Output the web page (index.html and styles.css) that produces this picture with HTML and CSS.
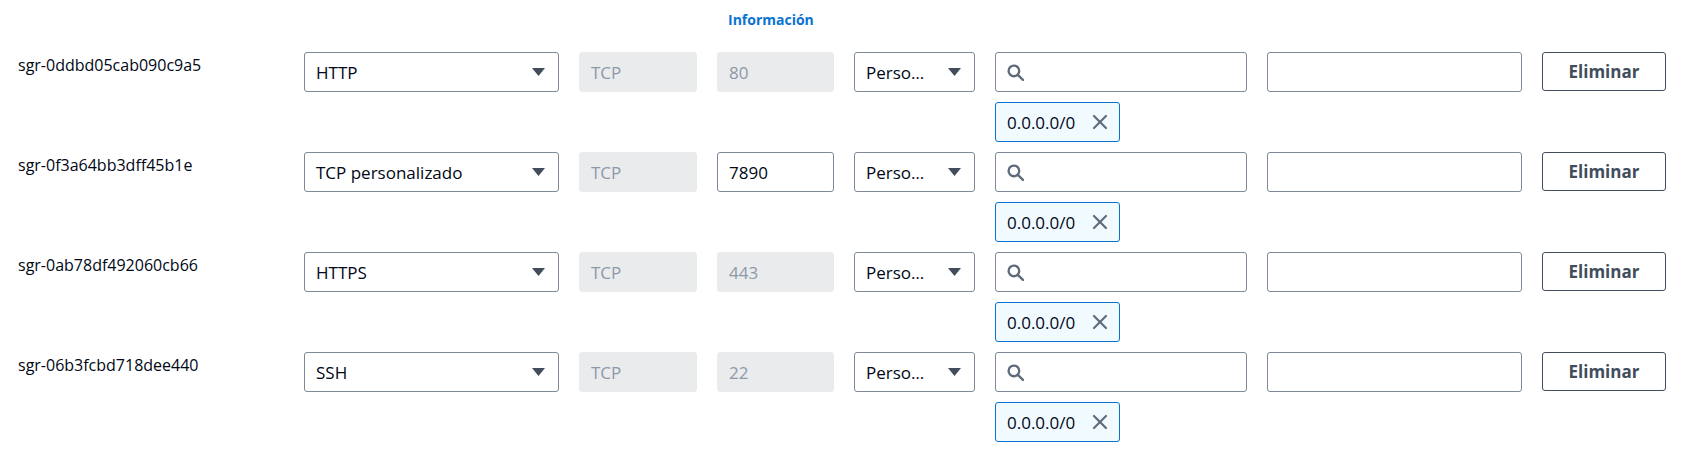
FILE: index.html
```html
<!DOCTYPE html>
<html lang="es">
<head>
<meta charset="utf-8">
<title>Reglas de entrada</title>
<link rel="stylesheet" href="styles.css">
</head>
<body>
<div class="editor">
  <div class="grid header">
    <div></div><div></div><div></div>
    <div class="info-cell"><a class="info" href="#">Información</a></div>
  </div>

  <div class="grid row">
    <div class="rule-id">sgr-0ddbd05cab090c9a5</div>
    <div class="field select"><span class="val">HTTP</span><svg class="caret" viewBox="0 0 13 8"><polygon points="0,0 13,0 6.5,8"/></svg></div>
    <div class="field disabled">TCP</div>
    <div class="field disabled">80</div>
    <div class="field select"><span class="val">Perso…</span><svg class="caret" viewBox="0 0 13 8"><polygon points="0,0 13,0 6.5,8"/></svg></div>
    <div class="source">
      <div class="field search"><svg class="mag" viewBox="0 0 16 16"><circle cx="6.5" cy="6.5" r="5"/><line x1="10.2" y1="10.2" x2="15" y2="15"/></svg></div>
      <div class="token"><span>0.0.0.0/0</span><svg class="x" viewBox="0 0 16 16"><line x1="2" y1="2" x2="14" y2="14"/><line x1="14" y1="2" x2="2" y2="14"/></svg></div>
    </div>
    <div class="field"></div>
    <button class="btn" type="button">Eliminar</button>
  </div>

  <div class="grid row">
    <div class="rule-id">sgr-0f3a64bb3dff45b1e</div>
    <div class="field select"><span class="val">TCP personalizado</span><svg class="caret" viewBox="0 0 13 8"><polygon points="0,0 13,0 6.5,8"/></svg></div>
    <div class="field disabled">TCP</div>
    <div class="field">7890</div>
    <div class="field select"><span class="val">Perso…</span><svg class="caret" viewBox="0 0 13 8"><polygon points="0,0 13,0 6.5,8"/></svg></div>
    <div class="source">
      <div class="field search"><svg class="mag" viewBox="0 0 16 16"><circle cx="6.5" cy="6.5" r="5"/><line x1="10.2" y1="10.2" x2="15" y2="15"/></svg></div>
      <div class="token"><span>0.0.0.0/0</span><svg class="x" viewBox="0 0 16 16"><line x1="2" y1="2" x2="14" y2="14"/><line x1="14" y1="2" x2="2" y2="14"/></svg></div>
    </div>
    <div class="field"></div>
    <button class="btn" type="button">Eliminar</button>
  </div>

  <div class="grid row">
    <div class="rule-id">sgr-0ab78df492060cb66</div>
    <div class="field select"><span class="val">HTTPS</span><svg class="caret" viewBox="0 0 13 8"><polygon points="0,0 13,0 6.5,8"/></svg></div>
    <div class="field disabled">TCP</div>
    <div class="field disabled">443</div>
    <div class="field select"><span class="val">Perso…</span><svg class="caret" viewBox="0 0 13 8"><polygon points="0,0 13,0 6.5,8"/></svg></div>
    <div class="source">
      <div class="field search"><svg class="mag" viewBox="0 0 16 16"><circle cx="6.5" cy="6.5" r="5"/><line x1="10.2" y1="10.2" x2="15" y2="15"/></svg></div>
      <div class="token"><span>0.0.0.0/0</span><svg class="x" viewBox="0 0 16 16"><line x1="2" y1="2" x2="14" y2="14"/><line x1="14" y1="2" x2="2" y2="14"/></svg></div>
    </div>
    <div class="field"></div>
    <button class="btn" type="button">Eliminar</button>
  </div>

  <div class="grid row">
    <div class="rule-id">sgr-06b3fcbd718dee440</div>
    <div class="field select"><span class="val">SSH</span><svg class="caret" viewBox="0 0 13 8"><polygon points="0,0 13,0 6.5,8"/></svg></div>
    <div class="field disabled">TCP</div>
    <div class="field disabled">22</div>
    <div class="field select"><span class="val">Perso…</span><svg class="caret" viewBox="0 0 13 8"><polygon points="0,0 13,0 6.5,8"/></svg></div>
    <div class="source">
      <div class="field search"><svg class="mag" viewBox="0 0 16 16"><circle cx="6.5" cy="6.5" r="5"/><line x1="10.2" y1="10.2" x2="15" y2="15"/></svg></div>
      <div class="token"><span>0.0.0.0/0</span><svg class="x" viewBox="0 0 16 16"><line x1="2" y1="2" x2="14" y2="14"/><line x1="14" y1="2" x2="2" y2="14"/></svg></div>
    </div>
    <div class="field"></div>
    <button class="btn" type="button">Eliminar</button>
  </div>
</div>
</body>
</html>
```

FILE: styles.css
```css
* { box-sizing: border-box; }

body {
  margin: 0;
  background: #ffffff;
  font-family: "Open Sans", "Noto Sans", sans-serif;
  font-size: 16px;
  color: #000716;
}

.editor {
  padding: 0 15px 0 17px;
  display: flex;
  flex-direction: column;
  gap: 10px;
}

.grid {
  display: grid;
  grid-template-columns: 267px 255px 118px 117px 121px 252px 255px 124px;
  column-gap: 20px;
  align-items: start;
}

.header {
  height: 42px;
  padding-top: 8px;
}

.info-cell {
  padding-left: 11px;
}

.info {
  color: #0972d3;
  font-weight: 700;
  font-size: 14px;
  line-height: 18px;
  text-decoration: none;
}

.row {
  height: 90px;
}

.rule-id {
  padding-top: 2px;
  line-height: 22px;
  padding-left: 1px;
}

.field {
  height: 40px;
  border: 1px solid #7d8998;
  border-radius: 3px;
  background: #ffffff;
  display: flex;
  align-items: center;
  padding: 0 11px;
  font-size: 17px;
  white-space: nowrap;
}

.field.disabled {
  background: #e9ebed;
  border-color: #e9ebed;
  color: #8d99a8;
}

.select {
  justify-content: space-between;
  padding-right: 13px;
}

.caret {
  width: 13px;
  height: 8px;
  fill: #414d5c;
  flex: none;
}

.source {
  display: flex;
  flex-direction: column;
  align-items: flex-start;
  gap: 10px;
}

.search {
  width: 100%;
}

.mag {
  width: 17px;
  height: 17px;
  fill: none;
  stroke: #5f6b7a;
  stroke-width: 2.2;
  stroke-linecap: round;
}

.token {
  height: 40px;
  width: 125px;
  display: flex;
  align-items: center;
  justify-content: space-between;
  padding: 0 11px 0 11px;
  font-size: 17px;
  background: #f1faff;
  border: 1px solid #0972d3;
  border-radius: 3px;
}

.x {
  width: 16px;
  height: 16px;
  stroke: #5f6b7a;
  stroke-width: 2.2;
  stroke-linecap: round;
  flex: none;
}

.btn {
  height: 39px;
  border: 1px solid #414d5c;
  border-radius: 3px;
  background: #ffffff;
  color: #414d5c;
  font-family: inherit;
  font-size: 17px;
  font-weight: 700;
  padding: 0;
  cursor: pointer;
}
```
